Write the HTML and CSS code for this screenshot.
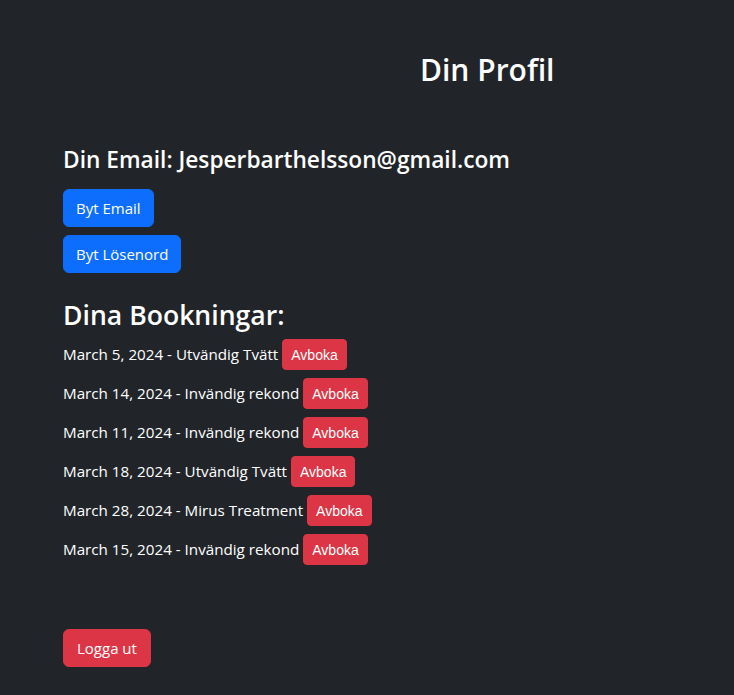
FILE: index.html
```html
<!DOCTYPE html>
<html lang="sv">
<head>
<meta charset="utf-8">
<title>Din Profil</title>
<link rel="stylesheet" href="styles.css">
</head>
<body>
<main class="page">
  <h1 class="title">Din Profil</h1>
  <h4 class="email">Din Email: Jesperbarthelsson@gmail.com</h4>
  <div class="actions">
    <button class="btn btn-primary">Byt Email</button>
    <button class="btn btn-primary">Byt Lösenord</button>
  </div>
  <h2 class="bookings-title">Dina Bookningar:</h2>
  <div class="bookings">
    <div class="booking"><span>March 5, 2024 - Utvändig Tvätt</span><button class="btn-sm">Avboka</button></div>
    <div class="booking"><span>March 14, 2024 - Invändig rekond</span><button class="btn-sm">Avboka</button></div>
    <div class="booking"><span>March 11, 2024 - Invändig rekond</span><button class="btn-sm">Avboka</button></div>
    <div class="booking"><span>March 18, 2024 - Utvändig Tvätt</span><button class="btn-sm">Avboka</button></div>
    <div class="booking"><span>March 28, 2024 - Mirus Treatment</span><button class="btn-sm">Avboka</button></div>
    <div class="booking"><span>March 15, 2024 - Invändig rekond</span><button class="btn-sm">Avboka</button></div>
  </div>
  <button class="btn btn-danger logout">Logga ut</button>
</main>
</body>
</html>
```
FILE: styles.css
```css
* { box-sizing: border-box; }
html, body { margin: 0; padding: 0; }
body {
  background: #212529;
  color: #fff;
  font-family: "Open Sans", "Noto Sans", sans-serif;
  font-size: 16px;
  line-height: 1.5;
  min-height: 695px;
}
.page {
  padding: 52px 63px 20px 63px;
  display: flex;
  flex-direction: column;
  align-items: flex-start;
}
h1, h2, h4 { font-weight: 600; line-height: 1.2; margin: 0; }
.title {
  font-size: 30px;
  margin-left: 357px;
}
.email {
  font-size: 22.7px;
  margin-top: 58px;
  margin-bottom: 16px;
}
.actions {
  display: flex;
  flex-direction: column;
  align-items: flex-start;
  gap: 8px;
}
.btn {
  font-family: inherit;
  font-size: 15px;
  line-height: 1.5;
  color: #fff;
  border: 1px solid transparent;
  border-radius: 6px;
  padding: 6px 12px;
  height: 38px;
}
.btn-primary { background: #0d6efd; border-color: #0d6efd; }
.btn-danger { background: #dc3545; border-color: #dc3545; }
.bookings-title {
  font-size: 26.6px;
  margin-top: 27px;
  margin-bottom: 7px;
}
.bookings {
  display: flex;
  flex-direction: column;
  gap: 8px;
}
.booking {
  display: flex;
  align-items: center;
  gap: 4px;
  height: 31px;
  font-size: 15.2px;
}
.btn-sm {
  font-family: "Liberation Sans", Arial, sans-serif;
  font-size: 14px;
  color: #fff;
  background: #dc3545;
  border: 1px solid #dc3545;
  border-radius: 4px;
  padding: 1px 8px 0 8px;
  height: 31px;
  line-height: 1.5;
}
.logout { margin-top: 64px; padding: 6px 13px; }
```
